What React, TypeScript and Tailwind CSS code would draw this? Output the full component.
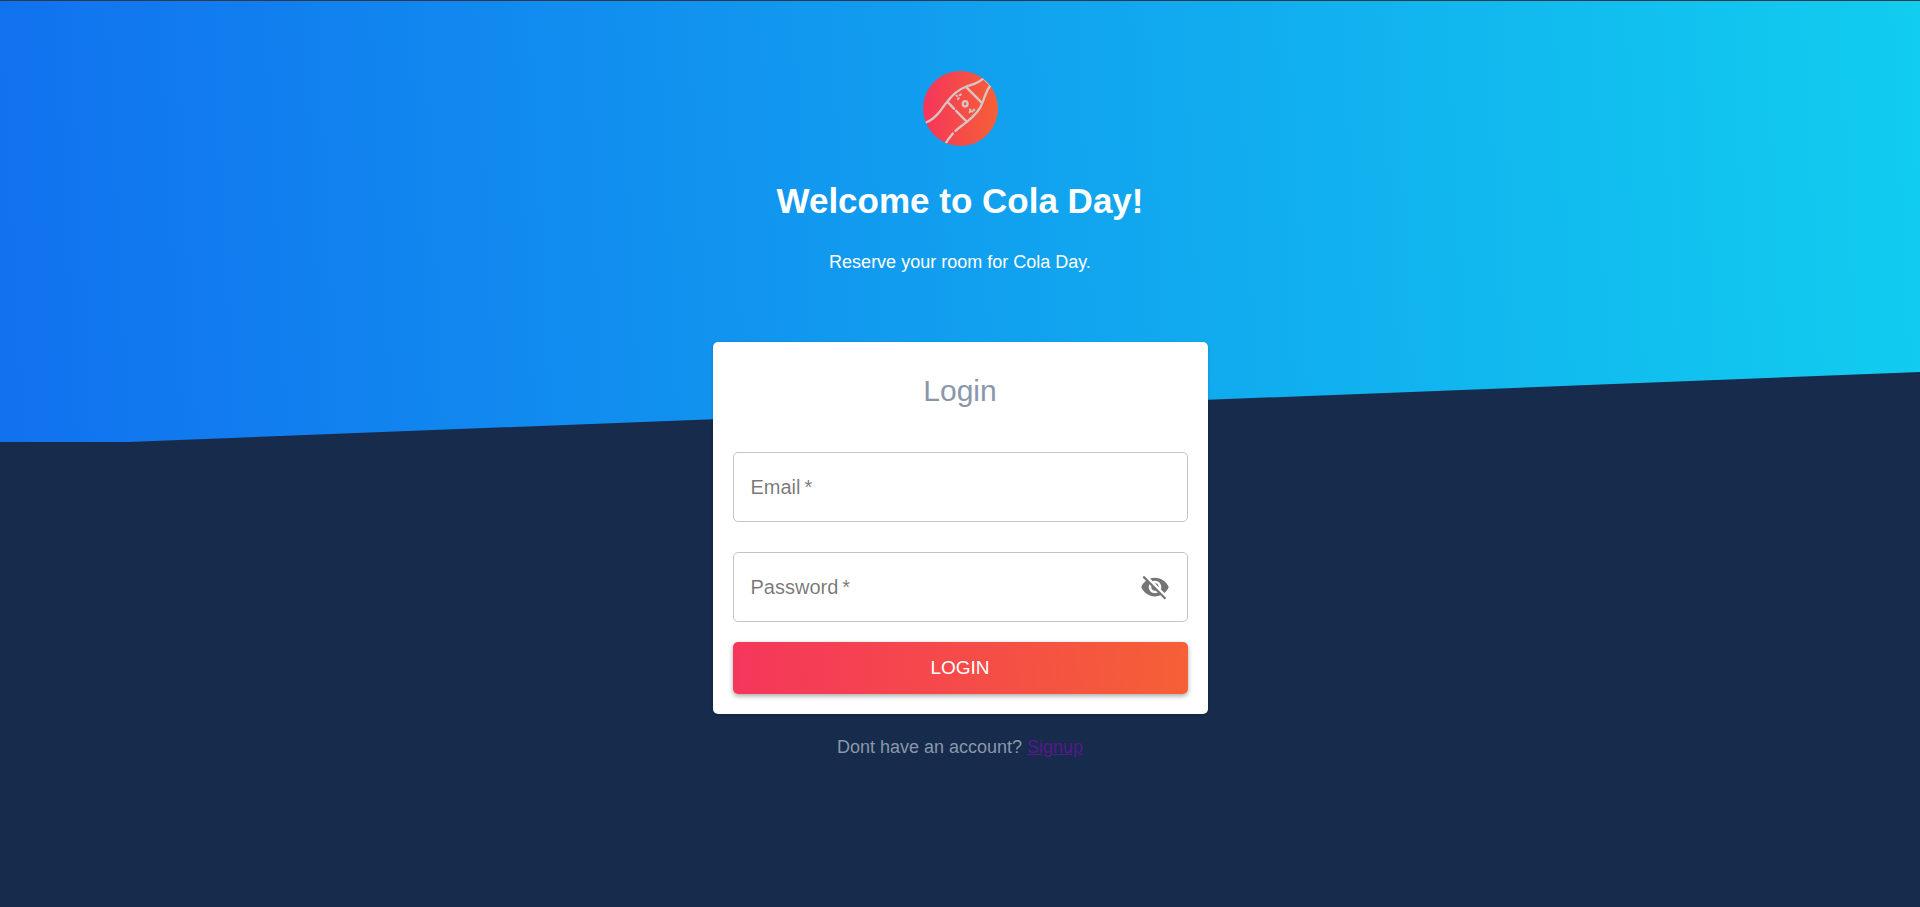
import { useState } from "react";
import { MdVisibility, MdVisibilityOff } from "react-icons/md";

function Logo() {
  return (
    <svg viewBox="70 34 224 224" className="size-[75px]" role="img" aria-label="Cola Day">
      <defs>
        <linearGradient id="logo-fill" x1="0" y1="0" x2="1" y2="0">
          <stop offset="0" stopColor="#f5365c" />
          <stop offset="1" stopColor="#f56036" />
        </linearGradient>
        <clipPath id="logo-clip">
          <circle cx="182" cy="146" r="112" />
        </clipPath>
      </defs>
      <circle cx="182" cy="146" r="112" fill="url(#logo-fill)" />
      <g clipPath="url(#logo-clip)" fill="none" stroke="#d8c4c0" strokeWidth="7" strokeLinecap="round">
        <path d="M74 190C96 182 110 168 121 154C130 142 136 132 143 125C158 105 174 90 198 81C214 75 236 72 252 54" />
        <path d="M274 74C258 92 255 112 247 130C240 151 222 169 201 186C190 195 178 202 167 213" />
        <path d="M159 221C150 231 144 238 137 252" />
        <path d="M199 82L246 129" />
        <path d="M144 127L163 147" />
        <path d="M169 153L201 186" />
        <path d="M250 57C258 65 265 71 272 79" strokeWidth="4" />
        <ellipse cx="196" cy="132" rx="7" ry="8" />
        <path d="M170 107L172 109M174 118L177 115M180 106L183 104M209 157L212 155M210 149L212 151M217 155L218 154M222 149L223 151" strokeWidth="6" />
      </g>
    </svg>
  );
}

const inputClass =
  "peer h-[70px] w-full rounded-[5px] border border-[#c4c4c4] bg-transparent px-[18px] text-xl text-black/87 outline-none focus:border-[#1171ef]";
const labelClass =
  "pointer-events-none absolute left-[18px] top-0 -translate-y-1/2 bg-white px-1 text-sm text-black/54 peer-placeholder-shown:top-1/2 peer-placeholder-shown:bg-transparent peer-placeholder-shown:px-0 peer-placeholder-shown:text-xl";

export default function App() {
  const [visible, setVisible] = useState(false);

  return (
    <div className="relative isolate flex min-h-screen flex-col items-center border-t border-[#32384a] bg-[#172b4d] font-['Liberation_Sans',Arial,sans-serif]">
      <div className="absolute inset-x-0 top-0 -z-10 h-[441px] bg-[linear-gradient(87deg,#1171ef,#11cdef)] [clip-path:polygon(0_0,100%_0,100%_371px,128px_100%,0_100%)]" />

      <header className="flex flex-col items-center pt-[70px] text-center text-white">
        <Logo />
        <h1 className="mt-[35px] text-[35px] leading-10 font-bold">Welcome to Cola Day!</h1>
        <p className="mt-[29px] text-lg leading-6">Reserve your room for Cola Day.</p>
      </header>

      <main className="mt-[68px] flex w-full max-w-[495px] flex-col items-center">
        <form
          className="w-full rounded-[5px] bg-white p-5 shadow-[0_1px_3px_rgba(0,0,0,0.2)]"
          onSubmit={(e) => e.preventDefault()}
        >
          <h2 className="mt-[9px] text-center text-3xl leading-10 text-[#8898aa]">Login</h2>
          <div className="relative mt-[41px]">
            <input id="email" type="email" required placeholder=" " className={inputClass} />
            <label htmlFor="email" className={labelClass}>Email&thinsp;*</label>
          </div>
          <div className="relative mt-[30px]">
            <input id="password" type={visible ? "text" : "password"} required placeholder=" " className={inputClass} />
            <label htmlFor="password" className={labelClass}>Password&thinsp;*</label>
            <button
              type="button"
              aria-label="Toggle password visibility"
              onClick={() => setVisible(!visible)}
              className="absolute right-[18px] top-5 text-black/54"
            >
              {visible ? <MdVisibility size={30} /> : <MdVisibilityOff size={30} />}
            </button>
          </div>
          <button
            type="submit"
            className="mt-5 h-[52px] w-full rounded-[5px] bg-[linear-gradient(87deg,#f5365c,#f56036)] text-[19px] text-white shadow-[0_2px_5px_rgba(0,0,0,0.35)]"
          >
            LOGIN
          </button>
        </form>
        <p className="mt-[21px] text-lg leading-6 text-[#8898aa]">
          Dont have an account? <a href="#signup" className="text-[#551a8b] underline">Signup</a>
        </p>
      </main>
    </div>
  );
}
